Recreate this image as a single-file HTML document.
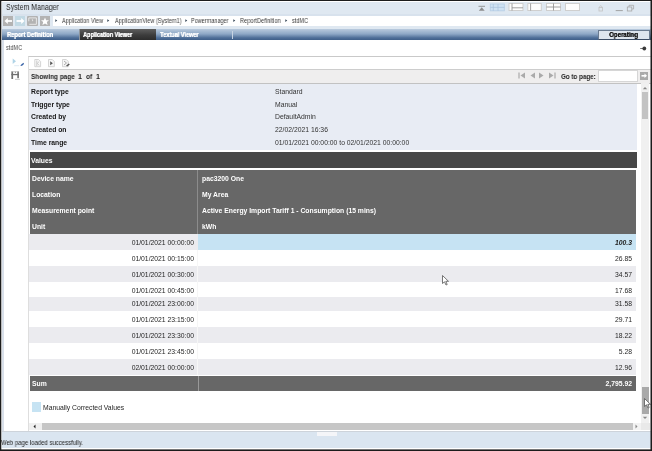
<!DOCTYPE html>
<html><head><meta charset="utf-8">
<style>
*{margin:0;padding:0;box-sizing:border-box}
html,body{width:652px;height:451px;overflow:hidden;background:#1c1c1c}
body{position:relative;font-family:"Liberation Sans",sans-serif;color:#151515}
.a{position:absolute}
.t{position:absolute;white-space:nowrap;line-height:1;will-change:transform}
.sg{transform-origin:0 50%}
</style></head><body>
<!-- window frame -->
<div class="a" style="left:1px;top:1px;width:650px;height:449px;background:#fff"></div>
<div class="a" style="left:2px;top:2px;width:649px;height:446px;background:#dfe8f1"></div>
<!-- title -->
<div class="t" style="left:6px;top:2.6px;font-size:8.6px;color:#262626;transform:scaleX(0.815);transform-origin:0 0">System Manager</div>

<!-- toolbar buttons -->
<div class="a" style="left:3px;top:16px;width:10px;height:10px;background:#b3b3b3"></div>
<div class="a" style="left:15px;top:16px;width:10px;height:10px;background:#c2d9e4"></div>
<div class="a" style="left:27px;top:16px;width:10.5px;height:10px;background:#b3b3b3;border-radius:1px"></div>
<svg class="a" style="left:27px;top:16px" width="11" height="10"><path d="M1.8 5.3 V1.9 H9.4 V8.3 H2.3" stroke="#f4f4f4" stroke-width="0.8" fill="none"/><path d="M5.3 3.3 L5.6 4.8 L6.1 4.6" stroke="#f4f4f4" stroke-width="0.8" fill="none"/></svg>
<div class="a" style="left:40px;top:16px;width:10px;height:10px;background:#b3b3b3"></div>
<svg class="a" style="left:3px;top:16px" width="48" height="10" viewBox="0 0 48 10">
 <path d="M4 5 H9" stroke="#fff" stroke-width="1.8"/>
 <path d="M1.5 5 L4.8 2 L4.8 8Z" fill="#fff"/>
 <path d="M13.5 5 H19" stroke="#fff" stroke-width="1.8"/>
 <path d="M21.5 5 L18.2 2 L18.2 8Z" fill="#fff"/>
 <path d="M42 1.5 L43.1 4.2 L46 4.3 L43.8 6.1 L44.6 9 L42 7.4 L39.4 9 L40.2 6.1 L38 4.3 L40.9 4.2 Z" fill="#fff"/>
</svg>
<!-- breadcrumb -->
<div class="a" style="left:2px;top:14px;width:649px;height:2px;background:#d8e2ed"></div>
<div class="a" style="left:53px;top:16px;width:598px;height:10px;background:#fff"></div>
<div class="t sg" style="left:54px;top:17px;font-size:7px;color:#555">
</div>
<svg class="a" style="left:0;top:15px" width="652" height="11">
 <path d="M55.3 4.3 L57.3 5.6 L55.3 6.9Z M107.3 4.3 L109.3 5.6 L107.3 6.9Z M185.3 4.3 L187.3 5.6 L185.3 6.9Z M233.3 4.3 L235.3 5.6 L233.3 6.9Z M285.3 4.3 L287.3 5.6 L285.3 6.9Z" fill="#3a4a5a"/>
</svg>
<div class="t" style="left:62px;top:17px;font-size:7px;color:#3c3c3c;transform:scaleX(0.80);transform-origin:0 0">Application View</div>
<div class="t" style="left:115px;top:17px;font-size:7px;color:#3c3c3c;transform:scaleX(0.80);transform-origin:0 0">ApplicationView (System1)</div>
<div class="t" style="left:191px;top:17px;font-size:7px;color:#3c3c3c;transform:scaleX(0.79);transform-origin:0 0">Powermanager</div>
<div class="t" style="left:240px;top:17px;font-size:7px;color:#3c3c3c;transform:scaleX(0.81);transform-origin:0 0">ReportDefinition</div>
<div class="t" style="left:292px;top:17px;font-size:7px;color:#3c3c3c;transform:scaleX(0.79);transform-origin:0 0">stdMC</div>

<!-- top right icons -->
<svg class="a" style="left:470px;top:2px" width="175" height="12" viewBox="0 0 175 12">
 <path d="M8.5 4.3 H15" stroke="#8c8c8c" stroke-width="0.9"/>
 <path d="M11.75 5.2 L8.8 8.8 L14.7 8.8Z" fill="#8c8c8c"/>
 <rect x="20.3" y="2" width="14" height="6.8" fill="#cfe2f3" stroke="#b8d0e6" stroke-width="0.9"/>
 <path d="M23.3 2 V8.8 M28 2 V8.8 M20.3 5.4 H34.3" stroke="#a9c3dd" stroke-width="0.7"/>
 <rect x="39" y="1.5" width="14" height="7" fill="#fdfdfd" stroke="#cfcfcf"/>
 <path d="M42 1.5 V8.5 M42 5.8 H53" stroke="#8a8a8a" stroke-width="0.8"/>
 <rect x="57.8" y="1.5" width="13.5" height="7" fill="#fdfdfd" stroke="#cfcfcf"/>
 <path d="M60.6 1.5 V8.5" stroke="#8a8a8a" stroke-width="0.8"/>
 <rect x="76.5" y="1.5" width="14" height="7" fill="#fdfdfd" stroke="#cfcfcf"/>
 <path d="M83.5 1.5 V8.5 M76.5 5 H90.5" stroke="#8a8a8a" stroke-width="0.8"/>
 <rect x="95.5" y="1.5" width="14" height="7" fill="#fdfdfd" stroke="#cfcfcf"/>
 <rect x="129" y="5.5" width="3.5" height="3.5" fill="none" stroke="#c2c2c2" stroke-width="0.8"/>
 <path d="M129.7 5.5 V4.5 Q130.75 2.8 131.8 4.5 V5.5" stroke="#c2c2c2" stroke-width="0.8" fill="none"/>
 <path d="M145.7 8.6 H152.8" stroke="#9a9a9a" stroke-width="0.9"/>
 <rect x="157.3" y="5" width="4.5" height="4" fill="none" stroke="#a8a8a8" stroke-width="0.8"/>
 <path d="M159 5 V3.3 H163.6 V7 H161.8" stroke="#a8a8a8" stroke-width="0.8" fill="none"/>
</svg>

<!-- tab bar -->
<div class="a" style="left:2px;top:29px;width:649px;height:11px;background:linear-gradient(#b9cadd,#8ea8c6 45%,#4f6f98 80%,#3f5f89)"></div>
<div class="a" style="left:79px;top:29px;width:77px;height:11px;background:linear-gradient(#5e5e5e,#3c3c3c 55%,#2c2c2c);border-left:1px solid #8d949c"></div>
<div class="a" style="left:232px;top:31px;width:1px;height:8px;background:#c7d4e3"></div>
<div class="t" style="left:6.7px;top:31.7px;font-size:6.3px;font-weight:bold;color:#fff;text-shadow:0.3px 0 0 #fff;transform:scaleX(0.9);transform-origin:0 0">Report Definition</div>
<div class="t" style="left:83.4px;top:31.7px;font-size:6.3px;font-weight:bold;color:#fff;text-shadow:0.3px 0 0 #fff;transform:scaleX(0.875);transform-origin:0 0">Application Viewer</div>
<div class="t" style="left:159.8px;top:31.7px;font-size:6.3px;font-weight:bold;color:#fff;text-shadow:0.3px 0 0 #fff;transform:scaleX(0.885);transform-origin:0 0">Textual Viewer</div>
<div class="a" style="left:598px;top:30px;width:52px;height:10px;background:#dde5ee;border:1px solid #6a7b90;border-bottom-color:#3a4b63"></div>
<div class="t" style="left:609px;top:31.5px;font-size:6.8px;font-weight:bold;color:#151515;text-shadow:0.2px 0 0 #151515;transform:scaleX(0.9);transform-origin:0 0">Operating</div>

<!-- white area -->
<div class="a" style="left:2px;top:40px;width:649px;height:391px;background:#fff"></div>
<div class="a" style="left:2px;top:40px;width:1.5px;height:391px;background:#d9e0ea"></div>
<div class="t" style="left:6px;top:44px;font-size:7px;color:#4a4a4a;transform:scaleX(0.80);transform-origin:0 0">stdMC</div>
<svg class="a" style="left:638px;top:45px" width="10" height="7"><path d="M2.2 3.5 H5" stroke="#666" stroke-width="0.9"/><circle cx="6.3" cy="3.5" r="1.9" fill="#3a3a3a"/></svg>
<div class="a" style="left:28px;top:56px;width:622px;height:1px;background:#c9c9c9"></div>

<!-- left sidebar icons -->
<svg class="a" style="left:6px;top:54px" width="22" height="30" viewBox="0 0 22 30">
 <path d="M6.7 4.6 L10 7.3 L6.7 10Z" fill="#b0d4e7"/>
 <path d="M8.2 11.7 H13.2" stroke="#dde9f2" stroke-width="0.9"/>
 <path d="M17.9 8.8 Q18.2 11.4 15 11.9 Q14.3 11.9 14.6 11.3 Q15.8 9.3 17.9 8.8Z" fill="#3560a5"/>
 <rect x="5.4" y="17.4" width="1.7" height="7.6" fill="#6e6e6e"/>
 <rect x="11.3" y="17.4" width="1.6" height="6.8" fill="#6e6e6e"/>
 <rect x="5.4" y="19.9" width="7.5" height="1.3" fill="#6e6e6e"/>
 <rect x="5.4" y="17.4" width="7.5" height="0.7" fill="#b4b4b4"/>
 <rect x="8.9" y="17.8" width="0.9" height="1" fill="#6e6e6e"/>
 <rect x="9" y="24.8" width="4.8" height="1" fill="#c6c6c6"/>
</svg>

<!-- report viewer panel -->
<div class="a" style="left:28px;top:56px;width:623px;height:375px;background:#fff;border-left:1px solid #dedede;border-top:1px solid #c9c9c9"></div>
<!-- toolbar icons -->
<svg class="a" style="left:33px;top:58px" width="40" height="10" viewBox="0 0 40 10">
 <path d="M1.8 1.5 H5.6 L7.6 3.5 V8.7 H1.8Z" fill="#f7f7f7" stroke="#d0d0d0" stroke-width="0.9"/>
 <path d="M3.8 2.5 V8 M6.2 3.5 L4.3 5.3 L6.2 7.5" stroke="#c0c0c0" stroke-width="0.8" fill="none"/>
 <path d="M15.5 1.5 H19.3 L21.3 3.5 V8.7 H15.5Z" fill="#f7f7f7" stroke="#d0d0d0" stroke-width="0.9"/>
 <path d="M17.2 3.3 L19.9 5.2 L17.2 7.2Z" fill="#555"/>
 <path d="M29.5 1.5 H33.3 L35.3 3.5 V8.7 H29.5Z" fill="#f7f7f7" stroke="#d0d0d0" stroke-width="0.9"/>
 <path d="M31 3 L33.5 5 L31 7" stroke="#999" stroke-width="0.8" fill="none"/>
 <path d="M33 7.8 L35.8 5.6 L36.8 6.6 L34.2 8.6Z" fill="#555"/>
</svg>
<!-- showing page bar -->
<div class="a" style="left:29px;top:69px;width:622px;height:15px;background:#efeeee;border-top:1px solid #cdcdcd;border-bottom:1px solid #c2c2c2"></div>
<div class="t" style="left:31px;top:73px;font-size:7.2px;font-weight:bold;color:#222;transform:scaleX(0.9);transform-origin:0 0">Showing page</div><div class="t" style="left:78.4px;top:73px;font-size:7.2px;font-weight:bold;color:#222;transform:scaleX(0.9);transform-origin:0 0">1</div><div class="t" style="left:85.7px;top:73px;font-size:7.2px;font-weight:bold;color:#222;transform:scaleX(0.9);transform-origin:0 0">of</div><div class="t" style="left:95.8px;top:73px;font-size:7.2px;font-weight:bold;color:#222;transform:scaleX(0.9);transform-origin:0 0">1</div>
<svg class="a" style="left:515px;top:70px" width="45" height="12" viewBox="0 0 45 12">
 <path d="M4 2.5 V8.5" stroke="#aaa" stroke-width="1.2"/>
 <path d="M10 2.5 L5.5 5.5 L10 8.5Z" fill="#aaa"/>
 <path d="M20 2.5 L15.5 5.5 L20 8.5Z" fill="#aaa"/>
 <path d="M24 2.5 L28.5 5.5 L24 8.5Z" fill="#aaa"/>
 <path d="M34 2.5 L38.5 5.5 L34 8.5Z" fill="#aaa"/>
 <path d="M40 2.5 V8.5" stroke="#aaa" stroke-width="1.2"/>
</svg>
<div class="t" style="left:560.8px;top:73px;font-size:7.2px;font-weight:bold;color:#222;transform:scaleX(0.87);transform-origin:0 0">Go to page:</div>
<div class="a" style="left:597.5px;top:69.5px;width:40.5px;height:12.5px;background:#fff;border:1px solid #d6d6d6"></div>
<div class="a" style="left:640px;top:72px;width:8px;height:7.5px;background:#a9a9a9"></div>
<svg class="a" style="left:640px;top:72px" width="8" height="8"><path d="M1.5 3.8 H5" stroke="#fff" stroke-width="1.6"/><path d="M4.5 1.5 L7 3.8 L4.5 6Z" fill="#fff"/></svg>

<!-- content -->
<div class="a" style="left:29px;top:84px;width:608px;height:66px;background:#e8ecf4"></div>
<div class="t" style="left:31px;top:89px;font-size:6.8px;font-weight:bold">Report type</div>
<div class="t" style="left:31px;top:101.65px;font-size:6.8px;font-weight:bold">Trigger type</div>
<div class="t" style="left:31px;top:114.3px;font-size:6.8px;font-weight:bold">Created by</div>
<div class="t" style="left:31px;top:126.95px;font-size:6.8px;font-weight:bold">Created on</div>
<div class="t" style="left:31px;top:139.6px;font-size:6.8px;font-weight:bold">Time range</div>
<div class="t" style="left:275px;top:89px;font-size:6.8px;color:#333">Standard</div>
<div class="t" style="left:275px;top:101.65px;font-size:6.8px;color:#333">Manual</div>
<div class="t" style="left:275px;top:114.3px;font-size:6.8px;color:#333">DefaultAdmin</div>
<div class="t" style="left:275px;top:126.95px;font-size:6.8px;color:#333">22/02/2021 16:36</div>
<div class="t" style="left:275px;top:139.6px;font-size:6.8px;color:#333">01/01/2021 00:00:00 to 02/01/2021 00:00:00</div>

<div class="a" style="left:30px;top:152px;width:607px;height:16px;background:#474747"></div>
<div class="t" style="left:31px;top:157.6px;font-size:6.8px;font-weight:bold;color:#fff">Values</div>
<div class="a" style="left:30px;top:170px;width:606px;height:64px;background:#676767"></div>
<div class="a" style="left:197px;top:170px;width:1px;height:64px;background:#8c8c8c"></div>
<div class="t" style="left:31.5px;top:175.5px;font-size:6.8px;font-weight:bold;color:#fff">Device name</div>
<div class="t" style="left:31.5px;top:191.5px;font-size:6.8px;font-weight:bold;color:#fff">Location</div>
<div class="t" style="left:31.5px;top:207.5px;font-size:6.8px;font-weight:bold;color:#fff">Measurement point</div>
<div class="t" style="left:31.5px;top:223.5px;font-size:6.8px;font-weight:bold;color:#fff">Unit</div>
<div class="t" style="left:201.5px;top:175.5px;font-size:6.8px;font-weight:bold;color:#fff">pac3200 One</div>
<div class="t" style="left:201.5px;top:191.5px;font-size:6.8px;font-weight:bold;color:#fff">My Area</div>
<div class="t" style="left:201.5px;top:207.5px;font-size:6.8px;font-weight:bold;color:#fff">Active Energy Import Tariff 1 - Consumption (15 mins)</div>
<div class="t" style="left:201.5px;top:223.5px;font-size:6.8px;font-weight:bold;color:#fff">kWh</div>

<!-- rows -->
<div id="rows"></div>
<div class="a" style="left:29px;top:234px;width:607px;height:16px;background:#ebebef"></div>
<div class="a" style="left:198px;top:234px;width:438px;height:16px;background:#c6e3f3"></div>
<div class="a" style="left:29px;top:266px;width:607px;height:16px;background:#ebebef"></div>
<div class="a" style="left:29px;top:297px;width:607px;height:14px;background:#ebebef"></div>
<div class="a" style="left:29px;top:327px;width:607px;height:16px;background:#ebebef"></div>
<div class="a" style="left:29px;top:359px;width:607px;height:16px;background:#ebebef"></div>
<div class="a" style="left:197px;top:250px;width:1px;height:125px;background:#f6f6f6"></div>

<div class="t" style="left:130.5px;top:239.5px;font-size:6.8px;color:#262626;width:63px;text-align:right">01/01/2021 00:00:00</div>
<div class="t" style="left:130.5px;top:255.5px;font-size:6.8px;color:#262626;width:63px;text-align:right">01/01/2021 00:15:00</div>
<div class="t" style="left:130.5px;top:271.5px;font-size:6.8px;color:#262626;width:63px;text-align:right">01/01/2021 00:30:00</div>
<div class="t" style="left:130.5px;top:287.5px;font-size:6.8px;color:#262626;width:63px;text-align:right">01/01/2021 00:45:00</div>
<div class="t" style="left:130.5px;top:300.8px;font-size:6.8px;color:#262626;width:63px;text-align:right">01/01/2021 23:00:00</div>
<div class="t" style="left:130.5px;top:316.8px;font-size:6.8px;color:#262626;width:63px;text-align:right">01/01/2021 23:15:00</div>
<div class="t" style="left:130.5px;top:332.8px;font-size:6.8px;color:#262626;width:63px;text-align:right">01/01/2021 23:30:00</div>
<div class="t" style="left:130.5px;top:348.7px;font-size:6.8px;color:#262626;width:63px;text-align:right">01/01/2021 23:45:00</div>
<div class="t" style="left:130.5px;top:364.7px;font-size:6.8px;color:#262626;width:63px;text-align:right">02/01/2021 00:00:00</div>

<div class="t" style="left:582px;top:239.5px;font-size:6.8px;color:#222;width:50px;text-align:right;font-weight:bold;font-style:italic">100.3</div>
<div class="t" style="left:582px;top:255.5px;font-size:6.8px;color:#262626;width:50px;text-align:right">26.85</div>
<div class="t" style="left:582px;top:271.5px;font-size:6.8px;color:#262626;width:50px;text-align:right">34.57</div>
<div class="t" style="left:582px;top:287.5px;font-size:6.8px;color:#262626;width:50px;text-align:right">17.68</div>
<div class="t" style="left:582px;top:300.8px;font-size:6.8px;color:#262626;width:50px;text-align:right">31.58</div>
<div class="t" style="left:582px;top:316.8px;font-size:6.8px;color:#262626;width:50px;text-align:right">29.71</div>
<div class="t" style="left:582px;top:332.8px;font-size:6.8px;color:#262626;width:50px;text-align:right">18.22</div>
<div class="t" style="left:582px;top:348.7px;font-size:6.8px;color:#262626;width:50px;text-align:right">5.28</div>
<div class="t" style="left:582px;top:364.7px;font-size:6.8px;color:#262626;width:50px;text-align:right">12.96</div>

<!-- sum -->
<div class="a" style="left:30px;top:375.5px;width:606px;height:15.5px;background:#676767"></div>
<div class="a" style="left:197.5px;top:375.5px;width:1px;height:15.5px;background:#999"></div>
<div class="t" style="left:32px;top:381px;font-size:6.8px;font-weight:bold;color:#fff">Sum</div>
<div class="t" style="left:582px;top:381px;font-size:6.8px;font-weight:bold;color:#fff;width:50px;text-align:right">2,795.92</div>

<!-- legend -->
<div class="a" style="left:32px;top:402px;width:9px;height:10px;background:#c6e3f3"></div>
<div class="t" style="left:43px;top:404.6px;font-size:6.8px;color:#262626">Manually Corrected Values</div>

<!-- vertical scrollbar -->
<div class="a" style="left:641px;top:83px;width:7.5px;height:340px;background:#f0f0f0"></div>
<svg class="a" style="left:640px;top:85px" width="10" height="6"><path d="M2.8 4.3 L5 2 L7.2 4.3Z" fill="#8a8a8a"/></svg>
<div class="a" style="left:642px;top:92px;width:6px;height:27px;background:#c3c3c3"></div>
<div class="a" style="left:642px;top:386.5px;width:7px;height:27px;background:#a9a9a9"></div>
<svg class="a" style="left:640px;top:415px" width="10" height="6"><path d="M2.8 1.7 L5 4 L7.2 1.7Z" fill="#8a8a8a"/></svg>

<!-- horizontal scrollbar -->
<div class="a" style="left:30px;top:423px;width:607px;height:7px;background:#c6c6c6"></div>
<div class="a" style="left:29px;top:423px;width:13px;height:7px;background:#f0f0f0"></div>
<div class="a" style="left:633px;top:423px;width:8px;height:7px;background:#f3f3f3"></div>
<div class="a" style="left:641px;top:423px;width:9px;height:7px;background:#e9e9e9"></div>
<svg class="a" style="left:30px;top:423px" width="12" height="7"><path d="M3.5 3.5 L5.5 1.5 L5.5 5.5Z" fill="#222"/></svg>
<svg class="a" style="left:633px;top:423px" width="8" height="7"><path d="M4.5 3.5 L2.5 1.5 L2.5 5.5Z" fill="#888"/></svg>

<!-- cursor -->
<svg class="a" style="left:442px;top:275px" width="9" height="12"><path d="M0.5 0.5 L0.5 8.5 L2.5 6.8 L4 10 L5.2 9.5 L3.8 6.3 L6.5 6.3Z" fill="#fff" stroke="#555" stroke-width="0.8"/></svg>
<svg class="a" style="left:644px;top:398px" width="8" height="12"><path d="M0.5 0.5 L0.5 8.5 L2.5 6.8 L4 10 L5.2 9.5 L3.8 6.3 L6.5 6.3Z" fill="#fff" stroke="#555" stroke-width="0.8"/></svg>

<!-- status bar -->
<div class="a" style="left:2px;top:431.5px;width:649px;height:16.5px;background:#dae5f0"></div>
<div class="a" style="left:2px;top:430.5px;width:649px;height:1px;background:#cdd3da"></div>
<div class="a" style="left:317px;top:432px;width:20px;height:3.5px;background:#f4f5f8"></div>
<div class="t" style="left:1px;top:438.5px;font-size:7px;color:#222;transform:scaleX(0.855);transform-origin:0 0">Web page loaded successfully.</div>
<!-- frame edges -->
<div class="a" style="left:0;top:0;width:652px;height:1px;background:#1c1c1c"></div>
<div class="a" style="left:0;top:0;width:1px;height:451px;background:#1c1c1c"></div>
<div class="a" style="left:1px;top:1px;width:1px;height:449px;background:rgba(28,28,28,0.3)"></div>
<div class="a" style="left:651px;top:0;width:1px;height:451px;background:#1c1c1c"></div>
<div class="a" style="left:650px;top:1px;width:1px;height:449px;background:rgba(28,28,28,0.5)"></div>
<div class="a" style="left:0;top:450px;width:652px;height:1px;background:#1c1c1c"></div>
<div class="a" style="left:1px;top:449px;width:650px;height:1px;background:rgba(28,28,28,0.6)"></div>
</body></html>
